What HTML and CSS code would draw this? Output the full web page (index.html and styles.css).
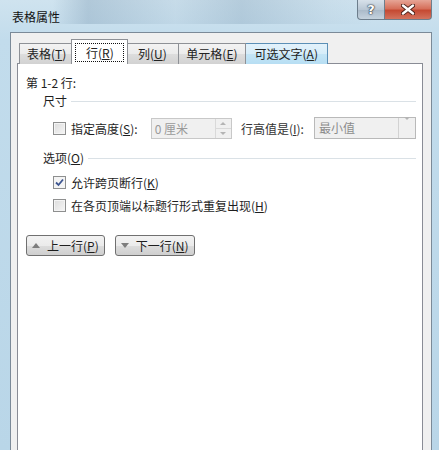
FILE: index.html
```html
<!DOCTYPE html>
<html lang="zh">
<head>
<meta charset="utf-8">
<link rel="stylesheet" href="styles.css">
</head>
<body>
<div class="window">
  <div class="titlebar">
    <div class="title">表格属性</div>
    <div class="caption">
      <div class="cap-btn help">?</div>
      <div class="cap-btn close"><svg viewBox="0 0 14 11" width="14" height="11"><path d="M2 1.5 L12 9.5 M12 1.5 L2 9.5" stroke="#4a2018" stroke-width="4.2" stroke-linecap="round"/><path d="M2 1.5 L12 9.5 M12 1.5 L2 9.5" stroke="#fff" stroke-width="2.4" stroke-linecap="round"/></svg></div>
    </div>
  </div>
  <div class="client">
    <div class="tabs">
      <div class="tab">表格(<u>T</u>)</div>
      <div class="tab active"><span class="focus">行(<u>R</u>)</span></div>
      <div class="tab">列(<u>U</u>)</div>
      <div class="tab">单元格(<u>E</u>)</div>
      <div class="tab hover">可选文字(<u>A</u>)</div>
    </div>
    <div class="panel">
      <div class="rows-label">第 1-2 行:</div>
      <div class="group-head"><span>尺寸</span><i class="rule"></i></div>
      <div class="size-row">
        <span class="check"></span>
        <span class="lbl">指定高度(<u>S</u>):</span>
        <div class="spin">
          <span class="spin-val">0 厘米</span>
          <span class="spin-btns"><b class="up"></b><b class="down"></b></span>
        </div>
        <span class="lbl lbl-gray">行高值是(<u>I</u>):</span>
        <div class="combo">
          <span class="combo-val">最小值</span>
          <span class="combo-btn"><b class="down"></b></span>
        </div>
      </div>
      <div class="group-head opts"><span>选项(<u>O</u>)</span><i class="rule"></i></div>
      <div class="opt-row"><span class="check checked"><svg viewBox="0 0 9 9" width="9" height="9"><path d="M1 4.5 L3.5 7 L8 1.5" fill="none" stroke="#3d5590" stroke-width="1.8"/></svg></span><span class="lbl">允许跨页断行(<u>K</u>)</span></div>
      <div class="opt-row"><span class="check"></span><span class="lbl">在各页顶端以标题行形式重复出现(<u>H</u>)</span></div>
      <div class="nav">
        <div class="btn"><span class="tri up-tri"></span>上一行(<u>P</u>)</div>
        <div class="btn"><span class="tri down-tri"></span>下一行(<u>N</u>)</div>
      </div>
    </div>
  </div>
</div>
</body>
</html>
```
FILE: styles.css
```css
* { box-sizing: border-box; }
html, body { margin: 0; padding: 0; }
body {
  width: 439px; height: 450px; overflow: hidden;
  font-family: "Noto Sans CJK SC", "Noto Sans", sans-serif;
  font-size: 12px; color: #1e1e1e;
}
u { text-decoration: underline; text-underline-offset: 1px; }
.window {
  width: 439px; height: 450px;
  display: flex; flex-direction: column;
  padding: 0 7px 0 10px;
  background:
    linear-gradient(90deg, rgba(120,150,175,0) 12%, rgba(120,150,175,0.35) 20%, rgba(150,175,195,0.15) 40%, rgba(120,150,175,0.3) 55%, rgba(150,175,195,0.1) 75%, rgba(120,150,175,0) 85%) 0 0 / 100% 24px no-repeat,
    linear-gradient(180deg, #cfe3ef 0, #c2dcec 40px, #b9d6e8 100%);
}
.titlebar {
  height: 32px; flex: none;
  display: flex; justify-content: space-between; align-items: flex-start;
}
.title { padding: 9px 0 0 2px; font-size: 12px; color: #111; line-height: 16px; }
.caption { display: flex; }
.cap-btn {
  height: 20px; display: flex; align-items: center; justify-content: center;
  border: 1px solid #6d7e8c; border-top: none;
}
.help {
  width: 28px; border-radius: 0 0 0 4px;
  color: #fff; font-family: "DejaVu Sans", sans-serif; font-weight: bold; font-size: 13px;
  text-shadow: 0 0 1px #2a3440, 0 0 1px #2a3440, 0 0 2px #2a3440;
  background: linear-gradient(180deg, #d7e1ea 0, #b9c7d4 50%, #a9b9c8 51%, #c5d3de 100%);
}
.close {
  width: 47px; border-left: none; border-radius: 0 0 4px 0;
  background: linear-gradient(180deg, #e6a596 0, #d6705b 45%, #c54a33 55%, #d3735e 100%);
}
.client {
  flex: 1; display: flex; flex-direction: column;
  background: #f0f0f0;
  border: 1px solid #7b8a98; border-bottom: none;
  padding: 6px 8px 0 6px;
}
.tabs {
  display: flex; align-items: flex-end; padding-left: 2px;
  margin-bottom: -1px; position: relative; z-index: 1;
  height: 25px;
}
.tab {
  height: 21px; padding: 0 7px; line-height: 19px; min-width: 52px; text-align: center;
  border: 1px solid #8e9196; border-bottom: none; border-right: none;
  background: linear-gradient(180deg, #f3f3f3 0, #ebebeb 50%, #dddddd 51%, #d2d2d2 100%);
  color: #222;
}
.tab:nth-child(4) { border-right: 1px solid #8e9196; }
.tab.hover {
  padding: 0 9px;
  background: linear-gradient(180deg, #e3f2fb 0, #d6edf9 50%, #c4e5f6 51%, #b7def3 100%);
  border: 1px solid #5b8fb6; border-bottom: none; border-left: none;
}
.tab.active {
  height: 25px; background: #fff; padding: 3px 3px 0 3px; min-width: 57px;
  margin: 0 -2px; border-right: 1px solid #8e9196;
  position: relative; z-index: 2; line-height: 17px;
}
.tab.active + .tab { border-left: none; }
.focus {
  display: block; border: 1px dotted #111; height: 19px;
}
.panel {
  flex: 1; background: #fff;
  border: 1px solid #898c95; border-bottom: none;
  padding: 11px 6px 0 8px;
  display: flex; flex-direction: column;
}
.rows-label { line-height: 16px; }
.group-head {
  display: flex; align-items: center; gap: 4px;
  padding-left: 17px; margin-top: 2px; line-height: 16px;
}
.rule { flex: 1; height: 1px; background: #dae1e6; }
.size-row {
  display: flex; align-items: center;
  padding-left: 27px; margin-top: 8px; height: 22px;
}
.check {
  width: 13px; height: 13px; flex: none;
  border: 1px solid #8e8f8f;
  background: linear-gradient(135deg, #dcdcdc 0, #f6f6f6 100%);
  box-shadow: inset 0 0 0 1px #f4f4f4;
  display: flex; align-items: center; justify-content: center;
  margin-right: 5px;
}
.check.checked { background: #f4f4f4; }
.lbl { white-space: nowrap; }
.lbl-gray { margin-left: 9px; color: #333; }
.spin {
  width: 82px; height: 21px; margin-left: 13px;
  display: flex; border: 1px solid #c8c8c8; background: #f0f0f0;
}
.spin-val { flex: 1; color: #9a9a9a; padding-left: 3px; line-height: 19px; }
.spin-btns {
  width: 16px; display: flex; flex-direction: column;
  border-left: 1px solid #d9d9d9;
}
.spin-btns b { flex: 1; display: flex; align-items: center; justify-content: center; }
.spin-btns b + b { border-top: 1px solid #d9d9d9; }
.up::before { content: ""; border: 3px solid transparent; border-bottom-color: #b4b4b4; border-top: none; }
.down::before { content: ""; border: 3px solid transparent; border-top-color: #b4b4b4; border-bottom: none; }
.combo {
  width: 103px; height: 22px; margin-left: 10px;
  display: flex; border: 1px solid #b9b9b9; background: #f0f0f0;
}
.combo-val { flex: 1; color: #8c8c8c; padding-left: 4px; line-height: 20px; }
.combo-btn {
  width: 17px; border-left: 1px solid #d2d2d2;
  display: flex; align-items: center; justify-content: center;
}
.opts { margin-top: 11px; }
.opt-row {
  display: flex; align-items: center; padding-left: 27px;
  height: 16px; margin-top: 8px;
}
.opt-row + .opt-row { margin-top: 7px; }
.nav { display: flex; gap: 10px; margin-top: 22px; }
.btn {
  height: 21px; padding: 0 5px 0 4px; line-height: 19px;
  border: 1px solid #707070; border-radius: 3px;
  background: linear-gradient(180deg, #f2f2f2 0, #ebebeb 50%, #dddddd 51%, #cfcfcf 100%);
  display: flex; align-items: center; white-space: nowrap;
}
.tri { width: 0; height: 0; border: 4px solid transparent; margin-right: 7px; margin-left: 1px; }
.up-tri { border-top: none; border-bottom: 5px solid #7d7d7d; }
.down-tri { border-bottom: none; border-top: 5px solid #7d7d7d; }
```
